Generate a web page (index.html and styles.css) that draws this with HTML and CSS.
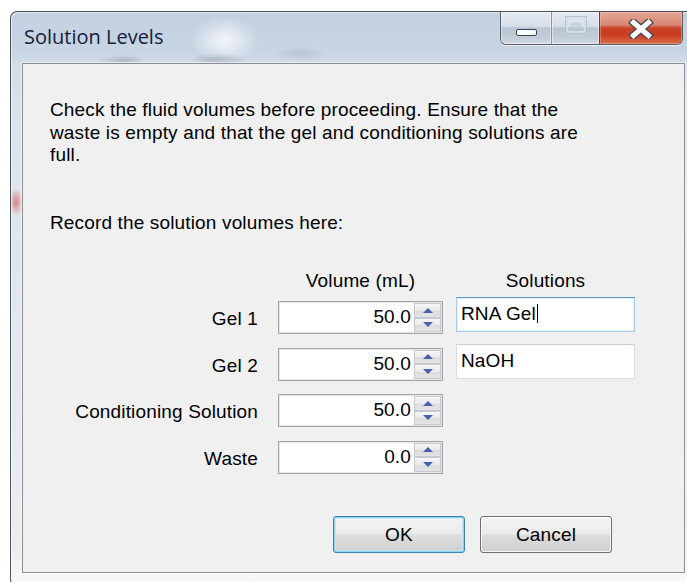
FILE: index.html
```html
<!DOCTYPE html>
<html lang="en">
<head>
<meta charset="utf-8">
<title>Solution Levels</title>
<link rel="stylesheet" href="styles.css">
</head>
<body>
<div class="window">
  <div class="titlebar">
    <span class="title">Solution Levels</span>
    <div class="caption">
      <span class="cbtn min"><i class="bar"></i></span>
      <span class="cbtn max"><i class="box"></i></span>
      <span class="cbtn close">
        <svg width="26" height="20" viewBox="0 0 26 20" aria-hidden="true">
          <path d="M5.5 3.5 L20.5 16.5 M20.5 3.5 L5.5 16.5" stroke="#4a4d55" stroke-width="7.8" stroke-linecap="square" fill="none"/>
          <path d="M5.5 3.5 L20.5 16.5 M20.5 3.5 L5.5 16.5" stroke="#ffffff" stroke-width="5" stroke-linecap="square" fill="none"/>
        </svg>
      </span>
    </div>
  </div>

  <div class="client">
    <p class="intro">Check the fluid volumes before proceeding. Ensure that the<br>waste is empty and that the gel and conditioning solutions are<br>full.</p>
    <p class="prompt">Record the solution volumes here:</p>

    <div class="form">
      <span></span>
      <span class="head vol">Volume (mL)</span>
      <span class="head sol">Solutions</span>

      <label class="lbl">Gel 1</label>
      <div class="num"><span class="val">50.0</span><span class="spin"><b class="up"></b><b class="dn"></b></span></div>
      <div class="txt focus">RNA Gel<span class="caret"></span></div>

      <label class="lbl">Gel 2</label>
      <div class="num"><span class="val">50.0</span><span class="spin"><b class="up"></b><b class="dn"></b></span></div>
      <div class="txt">NaOH</div>

      <label class="lbl">Conditioning Solution</label>
      <div class="num"><span class="val">50.0</span><span class="spin"><b class="up"></b><b class="dn"></b></span></div>
      <span></span>

      <label class="lbl">Waste</label>
      <div class="num"><span class="val">0.0</span><span class="spin"><b class="up"></b><b class="dn"></b></span></div>
      <span></span>
    </div>

    <div class="actions">
      <button class="btn default" type="button">OK</button>
      <button class="btn" type="button">Cancel</button>
    </div>
  </div>
</div>
</body>
</html>
```

FILE: styles.css
```css
* { box-sizing: border-box; }

html, body { margin: 0; padding: 0; }

body {
  width: 687px;
  height: 582px;
  overflow: hidden;
  background: #ffffff;
  font-family: "Liberation Sans", Arial, sans-serif;
  color: #000;
}

/* ---- window frame (Aero style) ---- */
.window {
  margin: 11px 0 0 10px;
  width: 677px;
  height: 575px;
  border: 1px solid #4a5260;
  border-right: 0;
  border-radius: 7px 0 0 7px;
  display: flex;
  flex-direction: column;
  overflow: hidden;
  background:
    radial-gradient(7px 14px at 5px 190px, rgba(214, 90, 90, 0.7), rgba(214, 90, 90, 0) 100%),
    linear-gradient(to bottom, #c2d0e0 0px, #c8d5e3 40px, #d3dde8 52px, #dde3ea 110px, #e5e9ee 380px, #eceef1 540px, #f8f8f8 566px, #ffffff 575px);
  box-shadow: inset 1px 1px 0 rgba(255, 255, 255, 0.55);
}

.titlebar {
  height: 51px;
  flex: none;
  display: flex;
  align-items: flex-start;
  background:
    radial-gradient(34px 24px at 214px 28px, rgba(255, 255, 255, 0.8), rgba(255, 255, 255, 0) 100%),
    radial-gradient(30px 6px at 208px 47px, rgba(95, 105, 118, 0.38), rgba(95, 105, 118, 0) 100%),
    radial-gradient(24px 5px at 112px 48px, rgba(95, 105, 118, 0.3), rgba(95, 105, 118, 0) 100%),
    radial-gradient(28px 8px at 290px 42px, rgba(120, 130, 145, 0.2), rgba(120, 130, 145, 0) 100%);
}

.title {
  padding: 15px 0 0 13px;
  font-family: "Open Sans", "Noto Sans", sans-serif;
  font-size: 20px;
  line-height: 20px;
  color: #15203a;
}

/* caption buttons */
.caption {
  margin-left: auto;
  margin-right: 4px;
  display: flex;
  height: 33px;
  border: 1px solid #59606c;
  border-top: 0;
  border-radius: 0 0 6px 6px;
  overflow: hidden;
  box-shadow: 0 1px 0 rgba(255, 255, 255, 0.6);
}

.cbtn {
  display: flex;
  align-items: center;
  justify-content: center;
  height: 100%;
}

.min, .max {
  background: linear-gradient(to bottom, #e4eaf1 0%, #d6dee8 45%, #b9c5d3 50%, #c3cdd9 80%, #d2dae3 100%);
  box-shadow: inset 0 0 0 1px rgba(255, 255, 255, 0.45);
}

.min {
  width: 51px;
  border-right: 1px solid #8a95a3;
  padding-top: 9px;
}

.max {
  width: 48px;
  border-right: 1px solid #8c3326;
}

.close {
  width: 82px;
  padding-top: 1px;
  background: linear-gradient(to bottom, #e3a797 0%, #d98873 40%, #c8432a 50%, #c93d22 72%, #dc6a4a 100%);
  box-shadow: inset 0 0 0 1px rgba(255, 210, 200, 0.35);
}

.bar {
  display: block;
  width: 21px;
  height: 7px;
  background: #fbfcfd;
  border: 1px solid #3a4656;
  border-radius: 2px;
}

.box {
  display: block;
  width: 20px;
  height: 16px;
  border: 2px solid #d9e0e8;
  outline: 1px solid #b3bfcc;
  background: linear-gradient(#c6d0db, #c6d0db) center / 10px 4px no-repeat;
  margin-top: -6px;
  opacity: 0.9;
}

/* ---- client area ---- */
.client {
  flex: none;
  height: 510px;
  margin: 0 2px 0 11px;
  border: 1px solid #8b8d90;
  background: #f0f0f0;
  box-shadow: 0 0 0 1px rgba(255, 255, 255, 0.55);
  display: flex;
  flex-direction: column;
  padding: 35px 0 0 27px;
  font-size: 19px;
  letter-spacing: 0.15px;
  line-height: 22.5px;
}

.intro, .prompt { margin: 0; }

.prompt { margin-top: 45px; }

/* labels, spinner boxes and text boxes */
.form {
  margin-top: 36px;
  display: grid;
  grid-template-columns: 228px 178px 179px;
  grid-template-rows: 27px repeat(4, 46.5px);
}

.head { align-self: start; }
.vol { width: 165px; text-align: center; }
.sol { width: 179px; text-align: center; }

.lbl {
  text-align: right;
  padding: 11px 20px 0 0;
  white-space: nowrap;
}

.num {
  width: 165px;
  height: 33px;
  margin-top: 4px;
  display: flex;
  background: #fff;
  border: 1px solid #a2a4a8;
  box-shadow: inset 0 0 0 1px #e6e6e6;
}

.val {
  flex: 1;
  text-align: right;
  padding: 4px 3px 0 0;
}

.spin {
  width: 28px;
  display: flex;
  flex-direction: column;
  padding: 1px 1px 1px 0;
}

.spin b {
  flex: 1;
  border: 1px solid #c5c8cc;
  background: linear-gradient(to bottom, #f6f6f6 0%, #e9e9e9 50%, #dcdcdc 51%, #e4e4e4 100%);
  display: flex;
  align-items: center;
  justify-content: center;
}

.spin b::after {
  content: "";
  width: 0;
  height: 0;
  border-left: 5px solid transparent;
  border-right: 5px solid transparent;
}

.spin .up::after { border-bottom: 5px solid #4a5fae; }
.spin .dn::after { border-top: 5px solid #4a5fae; }

.txt {
  width: 179px;
  height: 35px;
  padding: 5px 0 0 4px;
  background: #fff;
  border: 1px solid #dadcdf;
  border-top-color: #c9ccd0;
  display: flex;
  align-items: flex-start;
}

.txt.focus {
  border-color: #a9cdec;
  border-top-color: #5d95c6;
  box-shadow: inset 0 0 0 1px #e4f0fa;
}

.caret {
  display: inline-block;
  width: 1.5px;
  height: 19px;
  margin: 1px 0 0 1px;
  background: #000;
}

/* dialog buttons */
.actions {
  margin-top: auto;
  display: flex;
  justify-content: flex-end;
  gap: 15px;
  padding: 0 72px 19px 0;
}

.btn {
  width: 132px;
  height: 37px;
  font: inherit;
  font-size: 19px;
  letter-spacing: 0.15px;
  color: #000;
  border: 1px solid #707070;
  border-radius: 3px;
  background: linear-gradient(to bottom, #f3f3f3 0%, #ebebeb 48%, #dddddd 52%, #d0d0d0 100%);
  box-shadow: inset 0 0 0 1px rgba(255, 255, 255, 0.75);
  padding: 2px 0 0;
}

.btn.default {
  border-color: #3c7fb1;
  box-shadow: inset 0 0 0 1px #8fd3f3, inset 0 0 0 2px rgba(190, 232, 250, 0.8);
}
```
